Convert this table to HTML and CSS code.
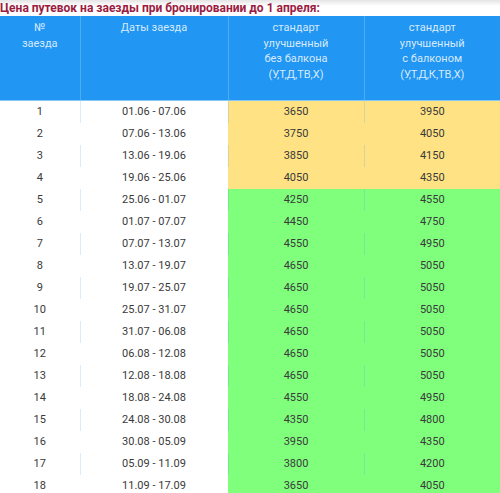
FILE: index.html
```html
<!DOCTYPE html>
<html lang="ru">
<head>
<meta charset="utf-8">
<title>Цены</title>
<link rel="stylesheet" href="styles.css">
</head>
<body>
<div class="title">Цена путевок на заезды при бронировании до 1 апреля:</div>
<table class="prices">
  <colgroup>
    <col class="c1"><col class="c2"><col class="c3"><col class="c4">
  </colgroup>
  <thead>
    <tr>
      <th>№<br>заезда</th>
      <th>Даты заезда</th>
      <th>стандарт<br>улучшенный<br>без балкона<br>(У,Т,Д,ТВ,Х)</th>
      <th>стандарт<br>улучшенный<br>с балконом<br>(У,Т,Д,К,ТВ,Х)</th>
    </tr>
  </thead>
  <tbody>
    <tr class="y"><td>1</td><td>01.06 - 07.06</td><td class="p">3650</td><td class="p">3950</td></tr>
    <tr class="y"><td>2</td><td>07.06 - 13.06</td><td class="p">3750</td><td class="p">4050</td></tr>
    <tr class="y"><td>3</td><td>13.06 - 19.06</td><td class="p">3850</td><td class="p">4150</td></tr>
    <tr class="y"><td>4</td><td>19.06 - 25.06</td><td class="p">4050</td><td class="p">4350</td></tr>
    <tr class="g"><td>5</td><td>25.06 - 01.07</td><td class="p">4250</td><td class="p">4550</td></tr>
    <tr class="g"><td>6</td><td>01.07 - 07.07</td><td class="p">4450</td><td class="p">4750</td></tr>
    <tr class="g"><td>7</td><td>07.07 - 13.07</td><td class="p">4550</td><td class="p">4950</td></tr>
    <tr class="g"><td>8</td><td>13.07 - 19.07</td><td class="p">4650</td><td class="p">5050</td></tr>
    <tr class="g"><td>9</td><td>19.07 - 25.07</td><td class="p">4650</td><td class="p">5050</td></tr>
    <tr class="g"><td>10</td><td>25.07 - 31.07</td><td class="p">4650</td><td class="p">5050</td></tr>
    <tr class="g"><td>11</td><td>31.07 - 06.08</td><td class="p">4650</td><td class="p">5050</td></tr>
    <tr class="g"><td>12</td><td>06.08 - 12.08</td><td class="p">4650</td><td class="p">5050</td></tr>
    <tr class="g"><td>13</td><td>12.08 - 18.08</td><td class="p">4650</td><td class="p">5050</td></tr>
    <tr class="g"><td>14</td><td>18.08 - 24.08</td><td class="p">4550</td><td class="p">4950</td></tr>
    <tr class="g"><td>15</td><td>24.08 - 30.08</td><td class="p">4350</td><td class="p">4800</td></tr>
    <tr class="g"><td>16</td><td>30.08 - 05.09</td><td class="p">3950</td><td class="p">4350</td></tr>
    <tr class="g"><td>17</td><td>05.09 - 11.09</td><td class="p">3800</td><td class="p">4200</td></tr>
    <tr class="g"><td>18</td><td>11.09 - 17.09</td><td class="p">3650</td><td class="p">4050</td></tr>
  </tbody>
</table>
</body>
</html>
```

FILE: styles.css
```css
html, body {
  margin: 0;
  padding: 0;
  background: #fff;
}

body {
  font-family: Roboto, "Noto Sans", Arial, sans-serif;
  font-size: 11px;
  color: #3a3a3a;
}

.title {
  height: 16px;
  line-height: 17px;
  font-size: 12px;
  font-weight: bold;
  color: #9b1c41;
  white-space: nowrap;
  overflow: hidden;
  background: linear-gradient(#e4e4e4, #fff 6px);
}

.prices {
  width: 500px;
  border-collapse: collapse;
  table-layout: fixed;
}

.c1 { width: 80px; }
.c2 { width: 148px; }
.c3 { width: 136px; }
.c4 { width: 136px; }

.prices th {
  background: #2196f3;
  color: rgba(255, 255, 255, 0.82);
  font-weight: normal;
  font-size: 11px;
  line-height: 15.7px;
  vertical-align: top;
  text-align: center;
  height: 84px;
  padding: 4px 2px 0;
  box-sizing: border-box;
  border-left: 1px solid rgba(255, 255, 255, 0.2);
  border-bottom: 1px solid #88c6f5;
}

.prices th:first-child {
  border-left: none;
}

.prices td {
  height: 22px;
  padding: 0 2px;
  text-align: center;
  vertical-align: middle;
  line-height: 22px;
  border-left: 1px solid transparent;
}

.prices td:first-child {
  border-left: none;
}

.prices tbody tr:nth-child(odd) td {
  border-left-color: rgba(33, 150, 243, 0.18);
}

.prices tbody tr:nth-child(odd) td:first-child {
  border-left-color: transparent;
}

.y .p { background: #ffe283; }
.g .p { background: #7fff7c; }
```
